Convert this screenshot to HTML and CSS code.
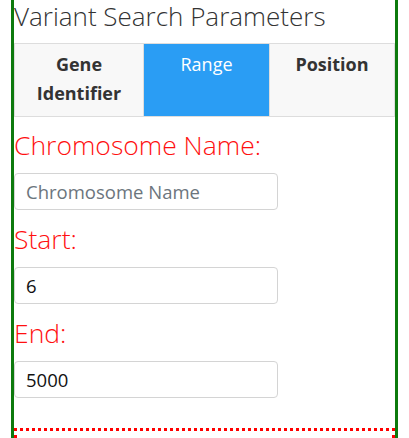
FILE: index.html
```html
<!DOCTYPE html>
<html>
<head>
<meta charset="utf-8">
<link rel="stylesheet" href="styles.css">
</head>
<body>
<div class="panel">
  <h1 class="title">Variant Search Parameters</h1>
  <div class="tabs">
    <div class="tab">Gene Identifier</div>
    <div class="tab active">Range</div>
    <div class="tab">Position</div>
  </div>
  <div class="form">
    <label class="label">Chromosome Name:</label>
    <input class="field" type="text" placeholder="Chromosome Name">
    <label class="label">Start:</label>
    <input class="field" type="text" value="6">
    <label class="label">End:</label>
    <input class="field" type="text" value="5000">
  </div>
  <div class="results"></div>
</div>
</body>
</html>
```
FILE: styles.css
```css
html, body {
  margin: 0;
  padding: 0;
  background: #fff;
  overflow: hidden;
}
body {
  font-family: "Open Sans", "Liberation Sans", sans-serif;
}
.panel {
  margin: 0 11px;
  border-left: 3px solid #0d7a0d;
  border-right: 3px solid #0d7a0d;
  height: 438px;
  box-sizing: border-box;
  overflow: hidden;
}
.title {
  margin: 0 0 11px 0;
  padding-top: 1px;
  font-size: 26px;
  font-weight: 300;
  line-height: 31px;
  color: #333;
  white-space: nowrap;
}
.tabs {
  display: grid;
  grid-template-columns: 128px 126px 1fr;
  border: 1px solid #ddd;
}
.tab {
  background: #f8f8f8;
  font-size: 18px;
  font-weight: 700;
  line-height: 29px;
  color: #333;
  text-align: center;
  padding: 6px 8px 8px;
  border-left: 1px solid #ddd;
}
.tab:first-child {
  border-left: 0;
}
.tab.active {
  background: #2a9df4;
  color: #fff;
  font-weight: 400;
}
.form {
  display: flex;
  flex-direction: column;
  align-items: flex-start;
  padding-top: 13px;
}
.label {
  font-size: 26.5px;
  font-weight: 300;
  line-height: 30px;
  color: #ff1010;
  margin-bottom: 13px;
}
.field {
  width: 264px;
  height: 37px;
  box-sizing: border-box;
  border: 1px solid #d4d4d4;
  border-radius: 4px;
  padding: 0 11px;
  font-family: "Open Sans", "Liberation Sans", sans-serif;
  font-size: 18.5px;
  color: #111;
  margin-bottom: 14px;
  outline: none;
}
.field::placeholder {
  color: #6c757d;
}
.results {
  margin-top: 16px;
  border: 3px dotted #ff0000;
  height: 40px;
}
```
